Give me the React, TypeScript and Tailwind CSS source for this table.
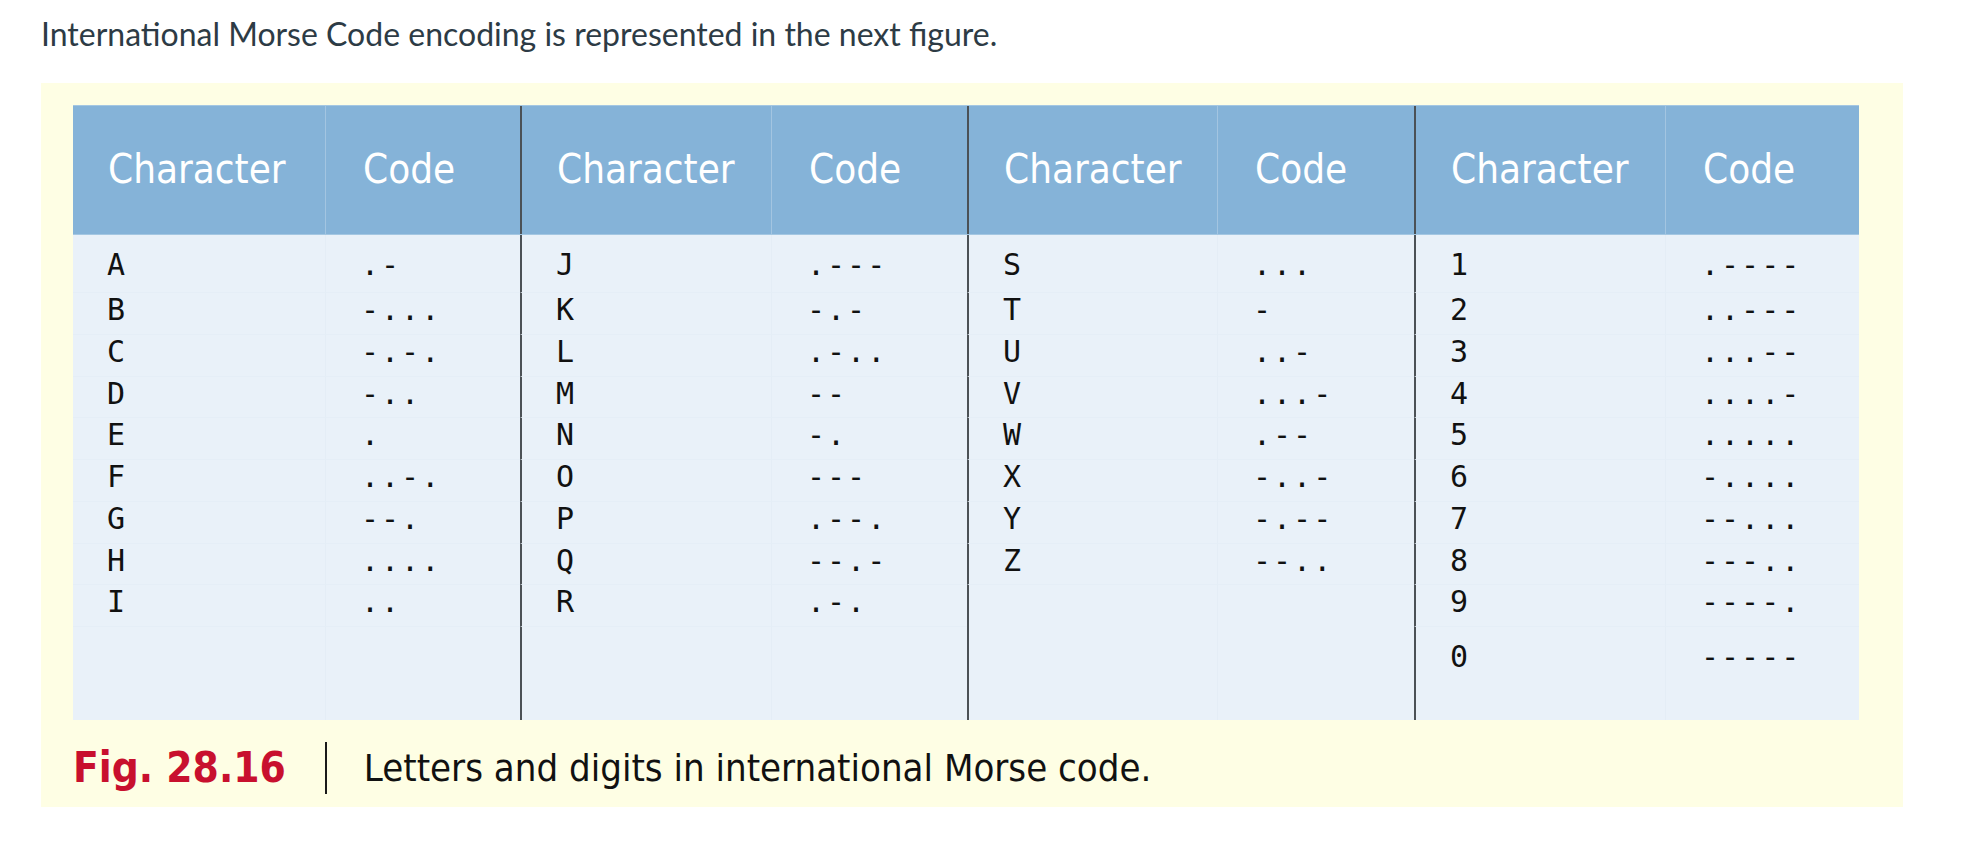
import React from 'react';

const groups = [
  [['A', '.-'], ['B', '-...'], ['C', '-.-.'], ['D', '-..'], ['E', '.'], ['F', '..-.'], ['G', '--.'], ['H', '....'], ['I', '..']],
  [['J', '.---'], ['K', '-.-'], ['L', '.-..'], ['M', '--'], ['N', '-.'], ['O', '---'], ['P', '.--.'], ['Q', '--.-'], ['R', '.-.']],
  [['S', '...'], ['T', '-'], ['U', '..-'], ['V', '...-'], ['W', '.--'], ['X', '-..-'], ['Y', '-.--'], ['Z', '--..']],
  [['1', '.----'], ['2', '..---'], ['3', '...--'], ['4', '....-'], ['5', '.....'], ['6', '-....'], ['7', '--...'], ['8', '---..'], ['9', '----.'], ['0', '-----']],
];

const cond = "font-['DejaVu_Sans_Condensed','DejaVu_Sans',sans-serif] font-stretch-condensed";
const mono = "font-['DejaVu_Sans_Mono',monospace]";

// first and last rows carry extra space above the text
const rowPad = (r: number) => (r === 0 || r === 9 ? 'pt-[15px]' : 'pt-[2px]');

const App = () => {
  const rows = Array.from({ length: 10 }, (_, r) => r);

  return (
    <div className="min-h-[860px] w-full bg-white pl-[41px] pt-[16px]">
      <p className="font-['Lato',sans-serif] text-[32px] leading-[36px] text-[#2d3b45]">
        International Morse Code encoding is represented in the next figure.
      </p>

      <div className="mt-[31px] h-[724px] w-[1862px] bg-[#fefee4] pl-[32px] pt-[22px]">
        <div className="w-[1786px]">
          {/* header */}
          <div className={`grid h-[130px] grid-cols-[252px_195px_251px_196px_250px_197px_251px_194px] border-t border-b border-[#a4c7e2] bg-[#85b3d8] text-[40px] leading-none text-white ${cond}`}>
            {groups.map((_, g) => (
              <React.Fragment key={g}>
                <div className={`pl-[35px] pt-[43px] ${g > 0 ? 'border-l-2 border-l-[#4b5156]' : ''}`}>Character</div>
                <div className="border-l border-l-[#a3c5e1] pl-[37px] pt-[43px]">Code</div>
              </React.Fragment>
            ))}
          </div>

          {/* body */}
          <div className={`grid grid-cols-[252px_195px_251px_196px_250px_197px_251px_194px] grid-rows-[57px_repeat(8,41.75px)_94px] bg-[#e9f1f9] text-[30px] leading-none text-[#111] ${mono}`}>
            {rows.map((r) =>
              groups.map((items, g) => {
                const item = items[r];
                const sep = r > 0 && items[r - 1] ? 'border-t border-t-[#e5eef7]' : '';
                return (
                  <React.Fragment key={`${r}-${g}`}>
                    <div className={`${rowPad(r)} ${sep} ${g > 0 ? 'border-l-2 border-l-[#4b5156] pl-[34px]' : 'pl-[34px]'}`}>
                      {item ? item[0] : ''}
                    </div>
                    <div className={`${rowPad(r)} ${sep} border-l border-l-[#e4edf6] pl-[35px] tracking-[2px]`}>
                      {item ? item[1] : ''}
                    </div>
                  </React.Fragment>
                );
              })
            )}
          </div>

          {/* caption */}
          <div className={`flex h-[87px] items-center pt-[9px] ${cond}`}>
            <span className="text-[42px] font-bold leading-none text-[#c8102e]">Fig. 28.16</span>
            <span className="ml-[39px] h-[52px] w-[2px] bg-[#1a1a1a]" />
            <span className="ml-[37px] text-[38px] leading-none text-[#111]">Letters and digits in international Morse code.</span>
          </div>
        </div>
      </div>
    </div>
  );
};

export default App;
